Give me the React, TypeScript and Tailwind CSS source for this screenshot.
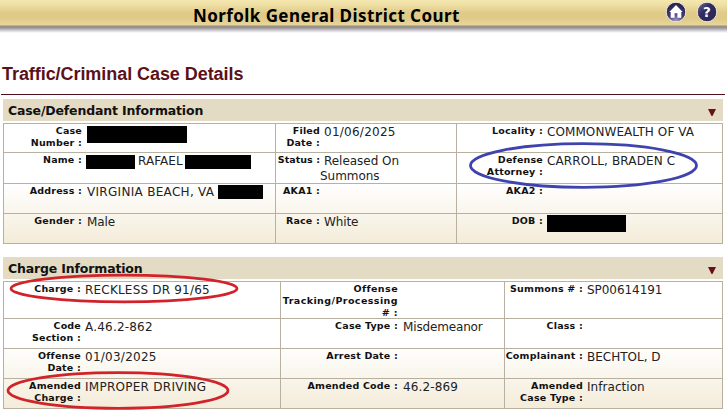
import React from "react";

type Field = { label: string[]; value?: React.ReactNode; spacing?: string; labelSpacing?: string };

const Bar = ({ className }: { className: string }) => (
  <span className={`inline-block shrink-0 bg-black ${className}`} />
);

function Cell({ field, labelWidth, valueClass }: { field: Field; labelWidth: string; valueClass: string }) {
  return (
    <div className="flex min-w-0 items-start border-t border-l border-[#b9b19f]">
      <div className={`flex shrink-0 flex-col items-end pt-[1px] text-[9.5px] leading-[12px] font-bold whitespace-nowrap ${labelWidth} ${field.labelSpacing ?? "tracking-[0.2px]"}`}>
        {field.label.map((line) => (
          <div key={line}>{line}</div>
        ))}
      </div>
      <div className={`flex pt-px text-[12px] leading-[15px] whitespace-nowrap text-[#222] ${valueClass} ${field.spacing ?? "tracking-[-0.1px]"}`}>
        {field.value}
      </div>
    </div>
  );
}

function Heading({ title }: { title: string }) {
  return (
    <div className="flex h-[22px] items-center justify-between bg-[#e3dbc3] pr-[7px] pl-[5px]">
      <h2 className="pt-px text-[12.5px] leading-[21px] font-bold tracking-[-0.16px]">{title}</h2>
      <svg className="mt-[4px] h-[7px] w-[8px]" viewBox="0 0 8 7">
        <path d="M0 0H8L4.5 7H3.5Z" fill="#6b1016" />
      </svg>
    </div>
  );
}

const caseRows: Field[][] = [
  [
    { label: ["Case", "Number :"], value: <Bar className="mt-[1px] h-[17px] w-[100px]" /> },
    { label: ["Filed", "Date :"], value: "01/06/2025", spacing: "tracking-[0.25px]" },
    { label: ["Locality :"], value: "COMMONWEALTH OF VA", spacing: "tracking-[0.08px]" },
  ],
  [
    {
      label: ["Name :"],
      value: (
        <>
          <Bar className="mt-[1px] -ml-px h-[14px] w-[49px]" />
          <span className="ml-[3px] w-[47px]">RAFAEL</span>
          <Bar className="mt-[1px] h-[14px] w-[66px]" />
        </>
      ),
      spacing: "tracking-[0.05px]",
    },
    { label: ["Status :"], labelSpacing: "tracking-[0.05px]", value: <span>Released On<br /><span className="-ml-1">Summons</span></span>, spacing: "tracking-[-0.03px]" },
    { label: ["Defense", "Attorney :"], value: "CARROLL, BRADEN C", spacing: "tracking-[0.14px]" },
  ],
  [
    {
      label: ["Address :"],
      value: (
        <>
          <span className="w-[131px]">VIRGINIA BEACH, VA</span>
          <Bar className="h-[14px] w-[45px]" />
        </>
      ),
      spacing: "tracking-[0.3px]",
    },
    { label: ["AKA1 :"] },
    { label: ["AKA2 :"] },
  ],
  [
    { label: ["Gender :"], value: "Male" },
    { label: ["Race :"], value: "White" },
    { label: ["DOB :"], value: <Bar className="h-[17px] w-[79px]" /> },
  ],
];

const chargeRows: Field[][] = [
  [
    { label: ["Charge :"], value: "RECKLESS DR 91/65", spacing: "tracking-[0.2px]" },
    { label: ["Offense", "Tracking/Processing", "# :"], labelSpacing: "tracking-[0.42px]" },
    { label: ["Summons # :"], value: "SP00614191", spacing: "tracking-[-0.05px]" },
  ],
  [
    { label: ["Code", "Section :"], value: "A.46.2-862", spacing: "tracking-[0.2px]" },
    { label: ["Case Type :"], value: "Misdemeanor", spacing: "tracking-[-0.15px]" },
    { label: ["Class :"] },
  ],
  [
    { label: ["Offense", "Date :"], value: "01/03/2025", spacing: "tracking-[0.25px]" },
    { label: ["Arrest Date :"] },
    { label: ["Complainant :"], value: "BECHTOL, D", spacing: "tracking-[0px]" },
  ],
  [
    { label: ["Amended", "Charge :"], value: "IMPROPER DRIVING", spacing: "tracking-[0.27px]" },
    { label: ["Amended Code :"], value: "46.2-869", spacing: "tracking-[0.15px]" },
    { label: ["Amended", "Case Type :"], value: "Infraction", spacing: "tracking-[0.05px]" },
  ],
];

export default function App() {
  return (
    <div className="relative h-[412px] w-[727px] overflow-hidden bg-white font-['DejaVu_Sans',sans-serif] text-[#111]">
      <header className="flex h-[34px] items-start bg-[linear-gradient(to_bottom,#f5e7b1_0px,#efdfa3_5px,#dfca88_13px,#dfca88_18px,#e7d59b_25px,#958d7c_26px,#9b969b_28px,#c7c5c9_30px,#ffffff_33px)]">
        <h1 className="ml-[193px] w-[472px] pt-[5px] font-['Noto_Sans','DejaVu_Sans',sans-serif] text-[17px] leading-[22px] font-bold tracking-[0.42px] whitespace-nowrap text-black">
          Norfolk General District Court
        </h1>
        <svg className="mt-[1px] h-[22px] w-[54px] shrink-0" viewBox="0 0 54 22">
          <defs>
            <radialGradient id="orb" cx="50%" cy="95%" r="85%">
              <stop offset="0" stopColor="#9d98c4" />
              <stop offset=".5" stopColor="#3f3a70" />
              <stop offset="1" stopColor="#292552" />
            </radialGradient>
            <linearGradient id="orb2" x1="0" y1="0" x2="1" y2="1">
              <stop offset="0" stopColor="#77739c" />
              <stop offset=".4" stopColor="#302b62" />
              <stop offset="1" stopColor="#29264f" />
            </linearGradient>
          </defs>
          <circle cx="11" cy="11" r="9.8" fill="url(#orb)" stroke="#eee7d5" strokeWidth="1" />
          <path d="M4.3 11 11 4l6.7 7H16.3v5.8H12.4V12.2H9.6v4.6H5.7V11Z" fill="#fff" />
          <circle cx="42" cy="11" r="9.8" fill="url(#orb2)" stroke="#eee7d5" strokeWidth="1" />
          <text x="42" y="15.8" textAnchor="middle" fontSize="13.5" fontWeight="bold" fill="#fff">?</text>
        </svg>
      </header>

      <h1 className="mt-[28px] ml-[2px] h-[32px] font-['Liberation_Sans',Arial,sans-serif] text-[18px] leading-[24px] font-bold tracking-[-0.06px] whitespace-nowrap text-[#5b1118]">
        Traffic/Criminal Case Details
      </h1>
      <div className="ml-px h-px w-[724px] bg-[#4b1218]" />

      <main className="mt-[4px] ml-[3px] w-[720px]">
        <section>
          <Heading title="Case/Defendant Information" />
          <div className="mt-[2px] grid grid-cols-[272px_181px_266px] grid-rows-[29px_31px_30px_30px] border-r border-b border-[#b9b19f] bg-[linear-gradient(to_bottom,#fff_50%,#f4ecda_100%)]">
            {caseRows.map((row, r) => (
              <React.Fragment key={r}>
                <Cell field={row[0]} labelWidth="w-[78px]" valueClass="ml-[5px]" />
                <Cell field={row[1]} labelWidth="w-[44px]" valueClass="ml-[4px]" />
                <Cell field={row[2]} labelWidth="w-[86px]" valueClass="ml-[4px]" />
              </React.Fragment>
            ))}
          </div>
        </section>

        <section className="mt-[13px]">
          <Heading title="Charge Information" />
          <div className="mt-[2px] grid grid-cols-[277px_224px_218px] grid-rows-[37px_30px_30px_30px] border-r border-b border-[#b9b19f] bg-[linear-gradient(to_bottom,#fff_50%,#f4ecda_100%)]">
            {chargeRows.map((row, r) => (
              <React.Fragment key={r}>
                <Cell field={row[0]} labelWidth="w-[77px]" valueClass="ml-[4px]" />
                <Cell field={row[1]} labelWidth="w-[117px]" valueClass="ml-[5px]" />
                <Cell field={row[2]} labelWidth="w-[78px]" valueClass="ml-[4px]" />
              </React.Fragment>
            ))}
          </div>
        </section>
      </main>

      <svg className="pointer-events-none absolute inset-0" width="727" height="412" viewBox="0 0 727 412" fill="none">
        <ellipse cx="583.5" cy="165.5" rx="113" ry="21.8" stroke="#3f43ae" strokeWidth="2.8" />
        <ellipse cx="124" cy="288.5" rx="113" ry="13.3" stroke="#d0232a" strokeWidth="2.8" />
        <ellipse cx="118" cy="390.5" rx="110" ry="17.8" stroke="#d0232a" strokeWidth="2.8" />
      </svg>
    </div>
  );
}
